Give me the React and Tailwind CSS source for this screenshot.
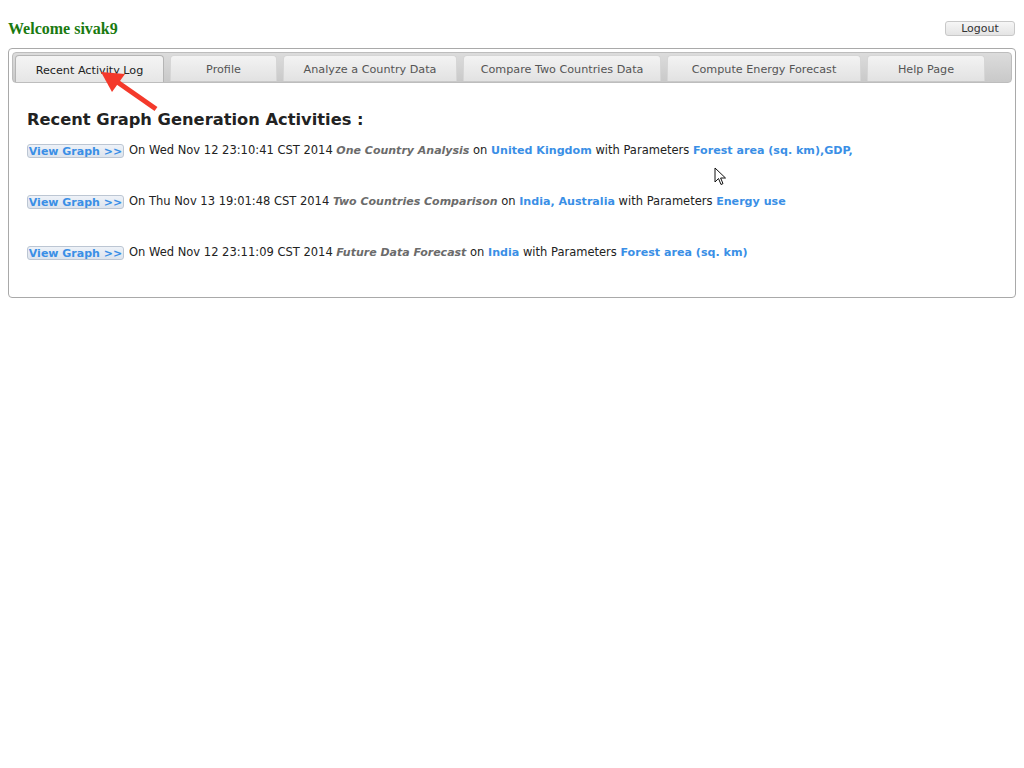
const TABS = [
  { label: 'Recent Activity Log', w: 'w-[149px]', active: true },
  { label: 'Profile', w: 'w-[107px]' },
  { label: 'Analyze a Country Data', w: 'w-[174px]' },
  { label: 'Compare Two Countries Data', w: 'w-[198px]' },
  { label: 'Compute Energy Forecast', w: 'w-[194px]' },
  { label: 'Help Page', w: 'w-[118px]' },
];

const ACTIVITIES = [
  {
    date: 'Wed Nov 12 23:10:41 CST 2014',
    kind: 'One Country Analysis',
    where: 'United Kingdom',
    params: 'Forest area (sq. km),GDP,',
  },
  {
    date: 'Thu Nov 13 19:01:48 CST 2014',
    kind: 'Two Countries Comparison',
    where: 'India, Australia',
    params: 'Energy use',
  },
  {
    date: 'Wed Nov 12 23:11:09 CST 2014',
    kind: 'Future Data Forecast',
    where: 'India',
    params: 'Forest area (sq. km)',
  },
];

const Arrow = () => (
  <svg className="absolute left-[96px] top-[66px]" width="66" height="48" viewBox="0 0 66 48">
    <line x1="60" y1="43" x2="17" y2="13" stroke="#f4392b" strokeWidth="5" strokeLinecap="butt" />
    <polygon points="5,6 29,8 16,26" fill="#f4392b" />
  </svg>
);

const Cursor = () => (
  <svg className="absolute left-[714px] top-[167px]" width="14" height="20" viewBox="0 0 14 20">
    <path d="M1 1 L1 15 L4.5 11.5 L7 17.5 L9 16.6 L6.6 11 L11.5 11 Z" fill="white" stroke="#111" strokeWidth="1" strokeLinejoin="round" />
  </svg>
);

export default function App() {
  return (
    <div className="relative min-h-[768px] bg-white px-2 pt-[17px] font-['DejaVu_Sans',sans-serif] text-[11px] text-[#222]">
      {/* Top bar */}
      <div className="flex items-center justify-between h-[22px]">
        <h2 className="font-['Liberation_Serif',serif] font-bold text-[16px] text-[#1a7a10] leading-none mt-[1px]">Welcome sivak9</h2>
        <button className="mr-[1px] w-[70px] h-[15px] rounded-[3px] border border-[#c8c8c8] bg-gradient-to-b from-[#f6f6f6] to-[#e4e4e4] text-[11px] leading-[13px] text-[#333]">
          Logout
        </button>
      </div>

      {/* Main panel */}
      <div className="mt-[9px] h-[250px] rounded-[4px] border border-[#a9a9a9] p-[3px]">
        <div className="flex h-[31px] items-end gap-[6px] rounded-[4px] border border-[#bdbdbd] bg-gradient-to-b from-[#dcdcdc] to-[#c9c9c9] pl-[2px] text-[11.2px]">
          {TABS.map((t) => (
            <div
              key={t.label}
              className={`${t.w} flex items-center justify-center pt-[4px] rounded-t-[4px] border border-b-0 ${
                t.active
                  ? 'h-[27px] border-[#b5b5b5] bg-gradient-to-b from-[#f4f4f4] to-[#e6e6e6] text-[#222]'
                  : 'h-[26px] mb-[1px] border-[#d6d6d6] bg-gradient-to-b from-[#f3f3f3] to-[#e2e2e2] text-[#555]'
              }`}
            >
              {t.label}
            </div>
          ))}
        </div>

        <div className="px-[15px] pt-[26px]">
          <h3 className="text-[16.3px] font-bold text-[#222] leading-[22px]">Recent Graph Generation Activities :</h3>
          <div className="mt-[12px] flex flex-col gap-[36px]">
            {ACTIVITIES.map((a) => (
              <div key={a.date} className="flex items-center gap-[5px] leading-[15px]">
                <span className="h-[14px] w-[97px] rounded-[3px] border border-[#bcc6d3] bg-gradient-to-b from-[#eef2f8] to-[#dde4ee] text-center font-bold text-[11px] leading-[13px] text-[#3a8fe6]">
                  View Graph &gt;&gt;
                </span>
                <span className="text-[11.5px]">
                  On {a.date}{' '}
                  <b className="italic text-[11px] text-[#6b6b6b]">{a.kind}</b> on{' '}
                  <b className="text-[11.1px] text-[#3a8fe6]">{a.where}</b> with Parameters{' '}
                  <b className="text-[11.1px] text-[#3a8fe6]">{a.params}</b>
                </span>
              </div>
            ))}
          </div>
        </div>
      </div>

      <Arrow />
      <Cursor />
    </div>
  );
}
